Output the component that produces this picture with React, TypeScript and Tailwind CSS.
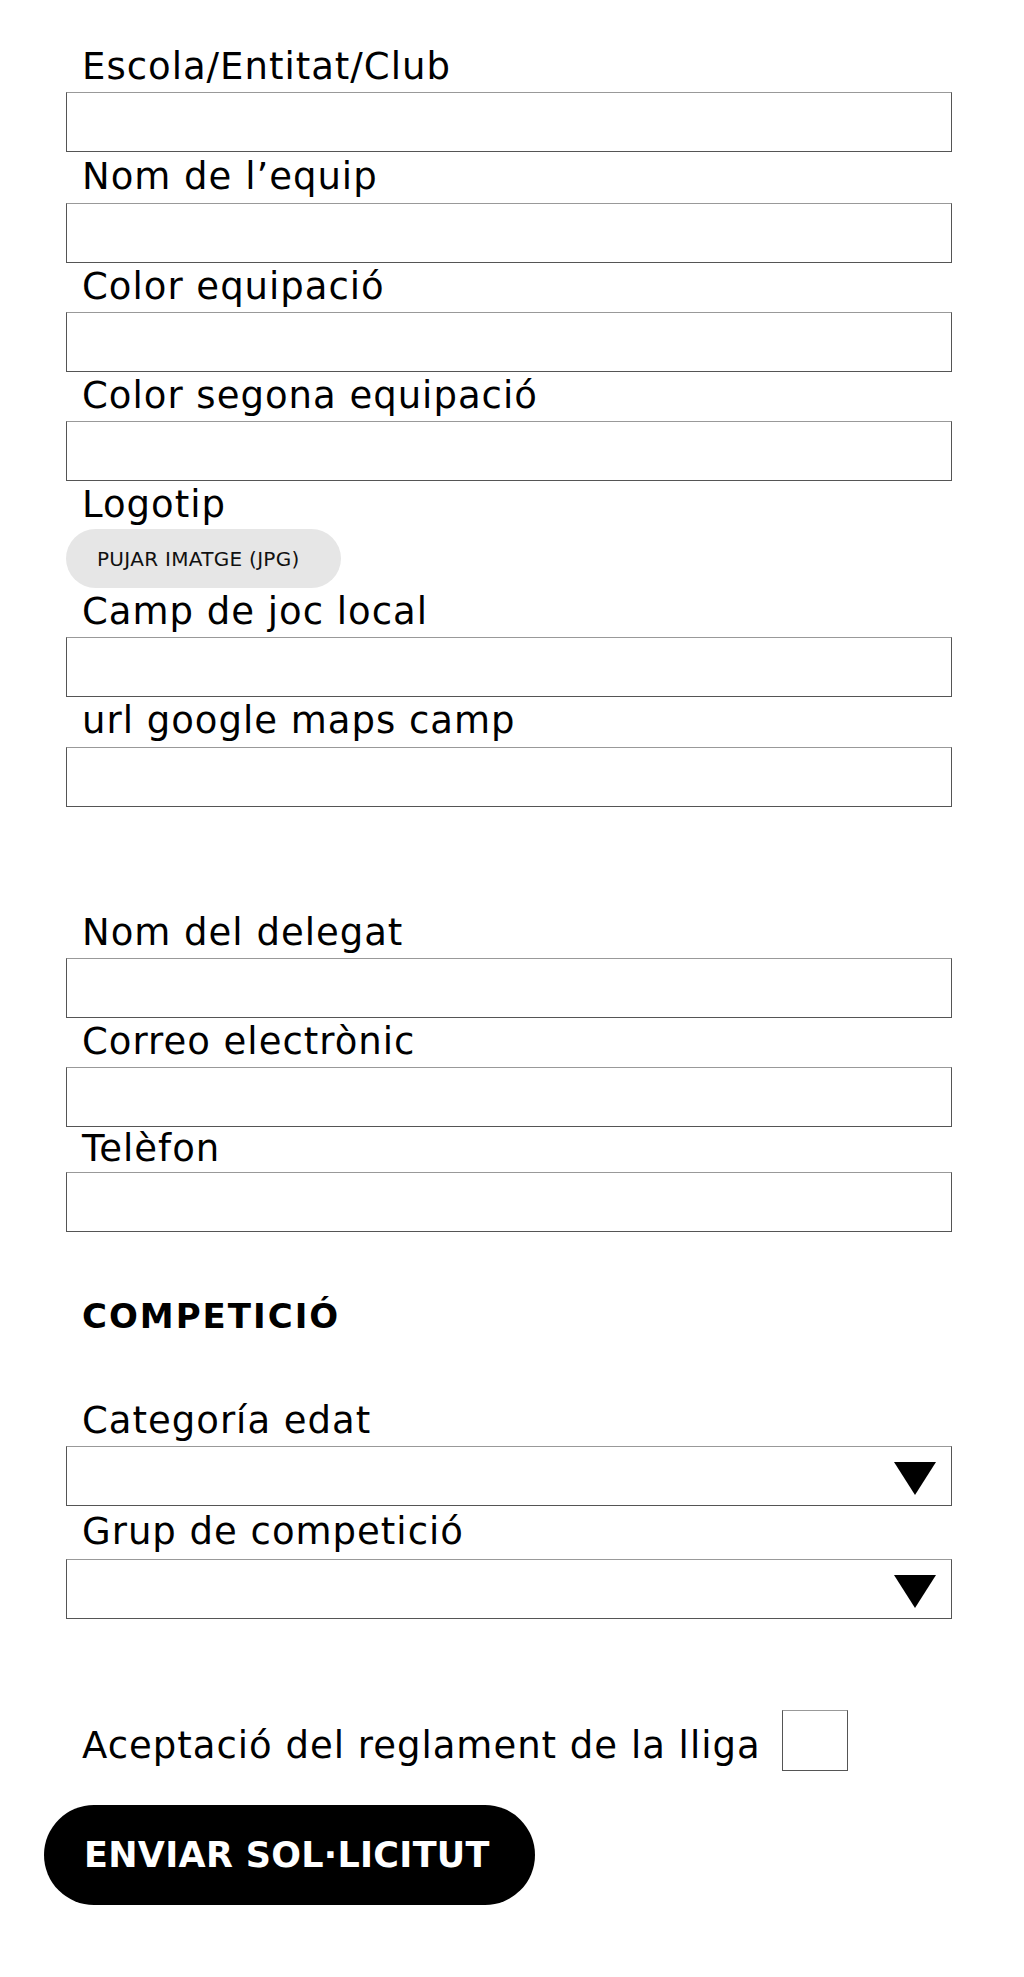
import React from 'react';

const font = { fontFamily: '"DejaVu Sans", "Noto Sans", sans-serif' };

type FieldProps = {
  label: string;
  labelClass?: string;
  select?: boolean;
};

function Caret() {
  return (
    <svg width="42" height="33" viewBox="0 0 42 33" className="shrink-0">
      <polygon points="0,0 42,0 21,33" fill="#000" />
    </svg>
  );
}

function Field({ label, labelClass = 'h-[49px] pb-[7px]', select }: FieldProps) {
  return (
    <div className="flex flex-col">
      <label className={`flex items-end pl-[16px] text-[37px] leading-none tracking-[1px] text-black ${labelClass}`}>
        {label}
      </label>
      {select ? (
        <div className="h-[60px] w-full border border-[#555] border-t-[#999] bg-white flex items-start justify-end pt-[15px] pr-[15px]">
          <Caret />
        </div>
      ) : (
        <input type="text" className="h-[60px] w-full border border-[#555] border-t-[#999] bg-white outline-none" />
      )}
    </div>
  );
}

export default function App() {
  return (
    <div className="min-h-[1977px] w-full bg-white text-black" style={font}>
      <form className="pl-[66px] w-[952px] pt-[43px] flex flex-col">
        <Field label="Escola/Entitat/Club" />
        <Field label="Nom de l’equip" labelClass="h-[51px] pb-[8px]" />
        <Field label="Color equipació" />
        <Field label="Color segona equipació" />

        {/* Logotip */}
        <div className="flex flex-col">
          <label className="flex items-end h-[48px] pb-[6px] pl-[16px] text-[37px] leading-none tracking-[1px]">Logotip</label>
          <button type="button" className="h-[59px] w-[275px] rounded-full bg-[#e6e6e6] pl-[31px] text-left text-[20px] leading-none tracking-[0.3px] text-[#111]">
            PUJAR IMATGE (JPG)
          </button>
        </div>

        <Field label="Camp de joc local" />
        <Field label="url google maps camp" labelClass="h-[50px] pb-[8px]" />

        <div className="h-[102px]" />

        <Field label="Nom del delegat" />
        <Field label="Correo electrònic" />
        <Field label="Telèfon" labelClass="h-[45px] pb-[5px]" />

        <h2 className="mt-[67px] pl-[16px] text-[34px] leading-none font-bold tracking-[2px]">COMPETICIÓ</h2>

        <div className="h-[64px]" />

        <Field label="Categoría edat" select />
        <Field label="Grup de competició" select labelClass="h-[53px] pb-[9px]" />

        <div className="mt-[91px] flex items-center pl-[16px]">
          <span className="text-[37px] leading-none tracking-[1px] pt-[10px]">Aceptació del reglament de la lliga</span>
          <input type="checkbox" className="ml-[21px] h-[61px] w-[66px] appearance-none border border-[#555] border-t-[#999] bg-white" />
        </div>

        <button
          type="submit"
          className="mt-[34px] -ml-[22px] h-[100px] w-[491px] rounded-full bg-black pl-[40px] text-left text-[35px] font-bold leading-none tracking-[0.3px] text-white"
        >
          ENVIAR SOL·LICITUT
        </button>
      </form>
    </div>
  );
}
